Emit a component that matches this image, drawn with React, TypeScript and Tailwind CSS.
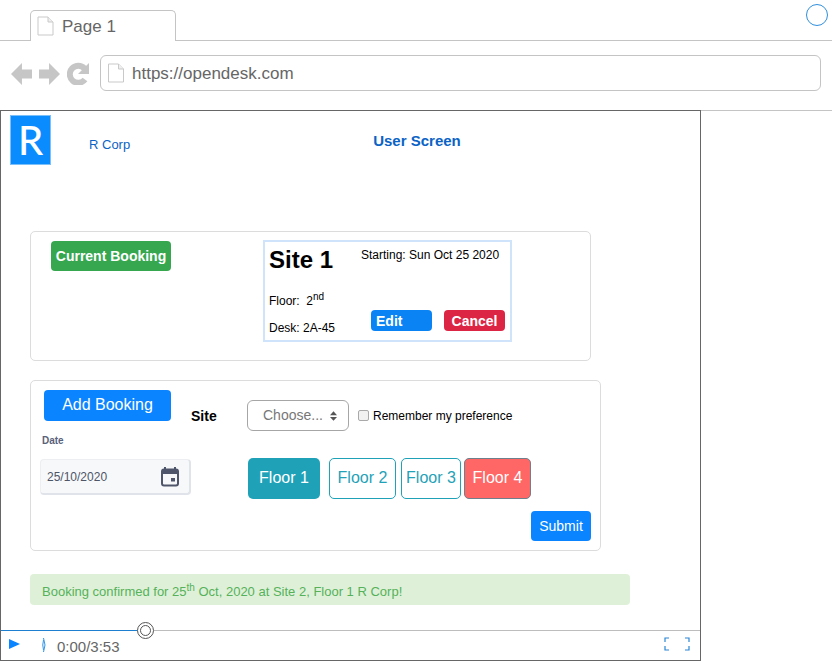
import React from 'react';

function DocIcon({ className }: { className: string }) {
  return (
    <svg viewBox="0 0 17 20" className={className} fill="none">
      <path d="M1 1h10l5 5v13H1z" fill="#fff" stroke="#c9c9c9" strokeWidth="1" />
      <path d="M11 1v5h5" fill="#efefef" stroke="#c9c9c9" strokeWidth="1" />
    </svg>
  );
}

function NavIcons() {
  return (
    <div className="flex items-center w-[89px] shrink-0 pl-[11px] gap-[7px] pt-[1px]">
      <svg viewBox="0 0 23 24" className="w-[23px] h-[24px]">
        <path d="M0 12 12 0v7h11v10H12v7z" fill="#c6c6c6" />
      </svg>
      <svg viewBox="0 0 23 24" className="w-[23px] h-[24px]">
        <path d="M23 12 11 0v7H0v10h11v7z" fill="#c6c6c6" />
      </svg>
      <svg viewBox="0 0 22 23" className="w-[22px] h-[23px] shrink-0">
        <path d="M18 17.500a8.500 8.500 0 1 1-.5-11" fill="none" stroke="#c6c6c6" strokeWidth="6" strokeLinecap="butt" />
        <path d="M22 1v11H11z" fill="#c6c6c6" />
      </svg>
    </div>
  );
}

function BrowserBar() {
  return (
    <div className="h-[111px] border-b border-[#c4c4c4]">
      <div className="h-[41px] border-b border-[#c4c4c4] flex items-end justify-between pl-[30px] pr-[4px]">
        <div className="w-[146px] h-[31px] -mb-px bg-white border border-b-0 border-[#c4c4c4] rounded-t-[5px] flex items-center pl-[6px] gap-[8px]">
          <DocIcon className="w-[17px] h-[20px]" />
          <span className="text-[17px] text-[#666] mt-[1px]">Page 1</span>
        </div>
        <div className="w-[22px] h-[22px] mb-[14px] rounded-full border border-[#2f8fdc]" />
      </div>
      <div className="flex items-center pt-[14px]">
        <NavIcons />
        <div className="ml-[11px] w-[721px] h-[36px] border border-[#c4c4c4] rounded-[6px] flex items-center pl-[6px] gap-[7px]">
          <DocIcon className="w-[18px] h-[20px]" />
          <span className="text-[17px] text-[#666] mt-[2px]">https://opendesk.com</span>
        </div>
      </div>
    </div>
  );
}

function CurrentBooking() {
  return (
    <div className="ml-[29px] mt-[66px] w-[561px] h-[130px] border border-[#dcdcdc] rounded-[5px] flex items-start">
      <div className="ml-[20px] mt-[9px] w-[120px] h-[30px] bg-[#36a64f] rounded-[4px] flex items-center justify-center text-white text-[14px] font-bold">
        Current Booking
      </div>
      <div className="ml-[92px] mt-[8px] w-[249px] h-[102px] border-2 border-[#cfe3fb] flex">
        <div className="w-[96px] pl-[4px] text-[12px] text-black">
          <div className="text-[24px] font-bold leading-[28px] mt-[4px]">Site 1</div>
          <div className="mt-[17px] h-[20px] leading-[20px]">
            Floor:&nbsp; 2<sup className="text-[10px] leading-none">nd</sup>
          </div>
          <div className="mt-[9px] leading-[16px]">Desk: 2A-45</div>
        </div>
        <div className="flex-1">
          <div className="text-[12px] text-black leading-[16px] mt-[5px]">Starting: Sun Oct 25 2020</div>
          <div className="flex mt-[47px] ml-[10px] gap-[12px]">
            <div className="w-[61px] h-[21px] bg-[#0a84f5] rounded-[4px] text-white text-[14px] font-bold leading-[22px] pl-[5px]">Edit</div>
            <div className="w-[61px] h-[21px] bg-[#dc2545] rounded-[4px] text-white text-[14px] font-bold leading-[22px] text-center">Cancel</div>
          </div>
        </div>
      </div>
    </div>
  );
}

function AddBooking() {
  return (
    <div className="ml-[29px] mt-[19px] w-[571px] h-[171px] border border-[#dcdcdc] rounded-[5px] flex items-start">
      <div className="w-[160px] shrink-0 pl-[9px]">
        <div className="ml-[4px] mt-[9px] w-[127px] h-[31px] bg-[#0a84ff] rounded-[4px] flex items-center justify-center text-white text-[16px] pb-[2px]">
          Add Booking
        </div>
        <div className="ml-[2px] mt-[13px] text-[10px] font-bold text-[#59627a] leading-[14px]">Date</div>
        <div className="mt-[11px] w-[151px] h-[36px] bg-[#f7f8fa] rounded-[4px] border border-[#eceef2] border-b-2 border-r-2 border-b-[#e1e3ea] border-r-[#e1e3ea] flex items-center justify-between pl-[6px] pr-[9px]">
          <span className="text-[12px] text-[#4d5566]">25/10/2020</span>
          <svg viewBox="0 0 20 20" className="w-[20px] h-[20px]">
            <path d="M5 0v3M15 0v3" stroke="#4f566b" strokeWidth="2" />
            <rect x="2" y="2.500" width="16" height="16" rx="2" fill="none" stroke="#4f566b" strokeWidth="2" />
            <rect x="2" y="3" width="16" height="4" fill="#4f566b" />
            <rect x="11" y="11" width="4" height="3.500" fill="#4f566b" />
          </svg>
        </div>
      </div>
      <div className="flex-1 pt-[19px] pr-[9px]">
        <div className="flex items-center h-[31px]">
          <span className="w-[56px] text-[14px] font-bold text-black leading-[31px] pt-[1px]">Site</span>
          <div className="w-[102px] h-[31px] border border-[#a6a6a6] rounded-[6px] flex items-center pl-[15px] text-[14px] text-[#777]">
            Choose...
            <svg viewBox="0 0 8 11" className="w-[7px] h-[10px] ml-[7px]">
              <path d="M4 0 8 4.500H0zM4 11 0 6.500h8z" fill="#555" />
            </svg>
          </div>
          <div className="ml-[9px] w-[11px] h-[11px] rounded-[2px] border border-[#a9a9a9] bg-[#f1f1f1]" />
          <span className="ml-[4px] text-[12px] text-black">Remember my preference</span>
        </div>
        <div className="flex mt-[27px] ml-[57px] h-[41px] text-[16px]">
          <div className="w-[72px] bg-[#1fa2b8] rounded-[5px] text-white flex items-center justify-center pb-[2px]">Floor 1</div>
          <div className="ml-[9px] w-[67px] border border-[#1fa2b8] rounded-[5px] text-[#1fa2b8] flex items-center justify-center pb-[2px]">Floor 2</div>
          <div className="ml-[5px] w-[60px] border border-[#1fa2b8] rounded-[5px] text-[#1fa2b8] flex items-center justify-center pb-[2px]">Floor 3</div>
          <div className="ml-[3px] w-[67px] bg-[#ff6666] border border-[#6f7f8c] rounded-[5px] text-white flex items-center justify-center pb-[2px]">Floor 4</div>
        </div>
        <div className="flex justify-end mt-[12px]">
          <div className="w-[60px] h-[30px] bg-[#0a84ff] rounded-[4px] text-white text-[14px] flex items-center justify-center">Submit</div>
        </div>
      </div>
    </div>
  );
}

function Controls() {
  return (
    <div className="relative h-[30px] border-t border-[#bdbdbd] flex items-center">
      <div className="absolute left-0 -top-px w-[137px] h-px bg-[#1e7ed0]" />
      <div className="absolute left-[136px] top-[-9px] w-[17px] h-[17px] rounded-full border border-[#555] bg-white flex items-center justify-center">
        <div className="w-[11px] h-[11px] rounded-full border border-[#555]" />
      </div>
      <svg viewBox="0 0 11 10" className="ml-[8px] w-[11px] h-[10px] -mt-[3px]">
        <path d="M0 0 11 5 0 10z" fill="#0a84ff" />
      </svg>
      <svg viewBox="0 0 5 16" className="ml-[22px] w-[5px] h-[16px] -mt-[2px]">
        <path d="M1.500 1q3 7 0 14M1.500 3q-1.500 5 0 10" fill="none" stroke="#2f95e8" strokeWidth="1" />
      </svg>
      <span className="ml-[10px] text-[15px] text-[#666] mt-[3px]">0:00/3:53</span>
      <svg viewBox="0 0 26 14" className="ml-auto mr-[10px] w-[26px] h-[14px] -mt-[3px]">
        <path d="M5 1H1v4M21 1h4v4M1 9v4h4M25 9v4h-4" fill="none" stroke="#2a86d6" strokeWidth="1.200" />
      </svg>
    </div>
  );
}

export default function App() {
  return (
    <div className="w-[832px] h-[661px] bg-white overflow-hidden font-['Liberation_Sans',Arial,sans-serif]">
      <BrowserBar />
      <div className="w-[701px] h-[551px] -mt-px border border-[#666] flex flex-col">
        <div className="flex items-start h-[54px]">
          <div className="ml-[9px] mt-[4px] w-[41px] h-[50px] bg-[#0a8cff] border border-[#7cc0fa] flex items-center justify-center text-white text-[40px] font-medium font-['Lato',sans-serif]">
            R
          </div>
          <span className="ml-[38px] mt-[24px] text-[13px] text-[#0b63c5]">R Corp</span>
          <span className="ml-[243px] mt-[19px] text-[15px] font-bold text-[#0b63c5]">User Screen</span>
        </div>
        <CurrentBooking />
        <AddBooking />
        <div className="ml-[29px] mt-[23px] w-[600px] h-[31px] bg-[#dff0d8] rounded-[4px] flex items-center pl-[12px] text-[13px] text-[#55b25a]">
          <span className="mt-[4px]">
            Booking confirmed for 25<sup className="text-[10px] leading-none">th</sup> Oct, 2020 at Site 2, Floor 1 R Corp!
          </span>
        </div>
        <div className="flex-1" />
        <Controls />
      </div>
    </div>
  );
}
